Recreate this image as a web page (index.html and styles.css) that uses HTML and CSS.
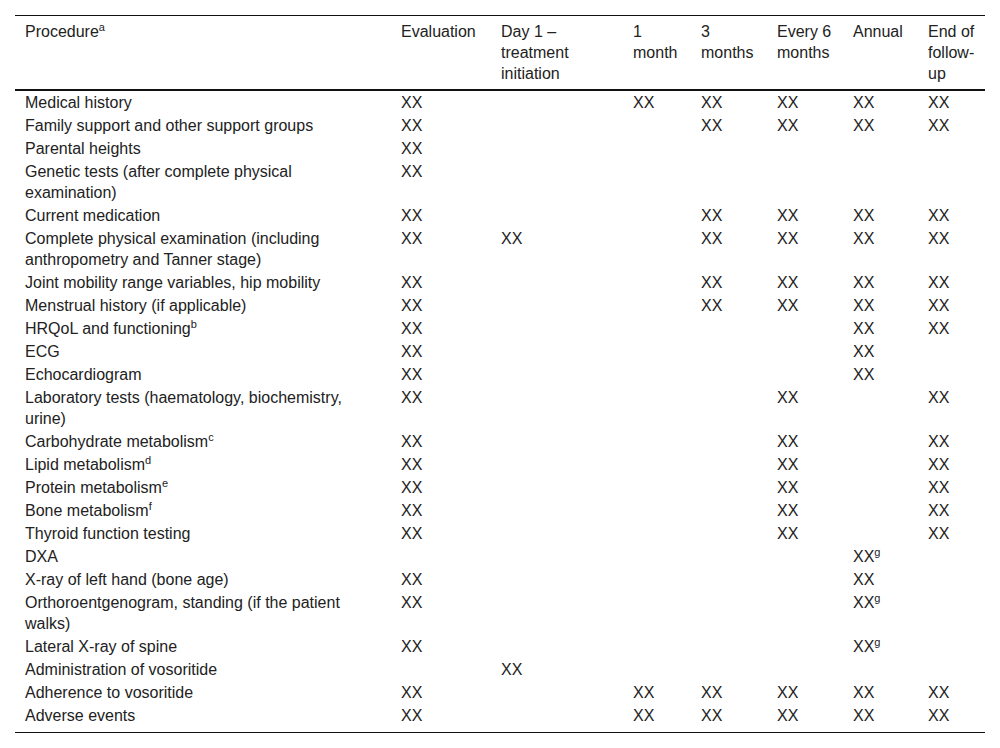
FILE: index.html
```html
<!DOCTYPE html>
<html lang="en">
<head>
<meta charset="utf-8">
<title>Procedures schedule</title>
<link rel="stylesheet" href="styles.css">
</head>
<body>
<div class="page">
<table class="schedule">
<colgroup>
<col class="c-proc"><col class="c-eval"><col class="c-day1"><col class="c-m1"><col class="c-m3"><col class="c-m6"><col class="c-ann"><col class="c-end">
</colgroup>
<thead>
<tr>
<th>Procedure<sup>a</sup></th>
<th>Evaluation</th>
<th>Day 1 –<br>treatment<br>initiation</th>
<th>1<br>month</th>
<th>3<br>months</th>
<th>Every 6<br>months</th>
<th>Annual</th>
<th>End of<br>follow-<br>up</th>
</tr>
</thead>
<tbody>
<tr><td>Medical history</td><td>XX</td><td></td><td>XX</td><td>XX</td><td>XX</td><td>XX</td><td>XX</td></tr>
<tr><td>Family support and other support groups</td><td>XX</td><td></td><td></td><td>XX</td><td>XX</td><td>XX</td><td>XX</td></tr>
<tr><td>Parental heights</td><td>XX</td><td></td><td></td><td></td><td></td><td></td><td></td></tr>
<tr><td>Genetic tests (after complete physical examination)</td><td>XX</td><td></td><td></td><td></td><td></td><td></td><td></td></tr>
<tr><td>Current medication</td><td>XX</td><td></td><td></td><td>XX</td><td>XX</td><td>XX</td><td>XX</td></tr>
<tr><td>Complete physical examination (including anthropometry and Tanner stage)</td><td>XX</td><td>XX</td><td></td><td>XX</td><td>XX</td><td>XX</td><td>XX</td></tr>
<tr><td>Joint mobility range variables, hip mobility</td><td>XX</td><td></td><td></td><td>XX</td><td>XX</td><td>XX</td><td>XX</td></tr>
<tr><td>Menstrual history (if applicable)</td><td>XX</td><td></td><td></td><td>XX</td><td>XX</td><td>XX</td><td>XX</td></tr>
<tr><td>HRQoL and functioning<sup>b</sup></td><td>XX</td><td></td><td></td><td></td><td></td><td>XX</td><td>XX</td></tr>
<tr><td>ECG</td><td>XX</td><td></td><td></td><td></td><td></td><td>XX</td><td></td></tr>
<tr><td>Echocardiogram</td><td>XX</td><td></td><td></td><td></td><td></td><td>XX</td><td></td></tr>
<tr><td>Laboratory tests (haematology, biochemistry, urine)</td><td>XX</td><td></td><td></td><td></td><td>XX</td><td></td><td>XX</td></tr>
<tr><td>Carbohydrate metabolism<sup>c</sup></td><td>XX</td><td></td><td></td><td></td><td>XX</td><td></td><td>XX</td></tr>
<tr><td>Lipid metabolism<sup>d</sup></td><td>XX</td><td></td><td></td><td></td><td>XX</td><td></td><td>XX</td></tr>
<tr><td>Protein metabolism<sup>e</sup></td><td>XX</td><td></td><td></td><td></td><td>XX</td><td></td><td>XX</td></tr>
<tr><td>Bone metabolism<sup>f</sup></td><td>XX</td><td></td><td></td><td></td><td>XX</td><td></td><td>XX</td></tr>
<tr><td>Thyroid function testing</td><td>XX</td><td></td><td></td><td></td><td>XX</td><td></td><td>XX</td></tr>
<tr><td>DXA</td><td></td><td></td><td></td><td></td><td></td><td>XX<sup>g</sup></td><td></td></tr>
<tr><td>X-ray of left hand (bone age)</td><td>XX</td><td></td><td></td><td></td><td></td><td>XX</td><td></td></tr>
<tr><td>Orthoroentgenogram, standing (if the patient walks)</td><td>XX</td><td></td><td></td><td></td><td></td><td>XX<sup>g</sup></td><td></td></tr>
<tr><td>Lateral X-ray of spine</td><td>XX</td><td></td><td></td><td></td><td></td><td>XX<sup>g</sup></td><td></td></tr>
<tr><td>Administration of vosoritide</td><td></td><td>XX</td><td></td><td></td><td></td><td></td><td></td></tr>
<tr><td>Adherence to vosoritide</td><td>XX</td><td></td><td>XX</td><td>XX</td><td>XX</td><td>XX</td><td>XX</td></tr>
<tr class="last"><td>Adverse events</td><td>XX</td><td></td><td>XX</td><td>XX</td><td>XX</td><td>XX</td><td>XX</td></tr>
</tbody>
</table>
</div>
</body>
</html>
```

FILE: styles.css
```css
html, body {
  margin: 0;
  padding: 0;
  background: #fff;
}

.page {
  padding: 15px;
}

.schedule {
  width: 970px;
  border-collapse: collapse;
  table-layout: fixed;
  font-family: "Liberation Sans", Arial, sans-serif;
  font-size: 16px;
  line-height: 21px;
  color: #222;
  border-top: 1px solid #111;
  border-bottom: 1px solid #111;
}

.c-proc { width: 376px; }
.c-eval { width: 100px; }
.c-day1 { width: 132px; }
.c-m1 { width: 68px; }
.c-m3 { width: 76px; }
.c-m6 { width: 76px; }
.c-ann { width: 75px; }
.c-end { width: 67px; }

.schedule th {
  font-weight: normal;
  text-align: left;
  vertical-align: top;
  white-space: nowrap;
  padding: 5px 2px 5px 10px;
  border-bottom: 2px solid #111;
}

.schedule td {
  text-align: left;
  vertical-align: top;
  padding: 1px 10px;
}

.schedule tr.last td {
  padding-bottom: 6px;
}

.schedule sup {
  font-size: 11px;
  line-height: 0;
  vertical-align: 6px;
}
```
